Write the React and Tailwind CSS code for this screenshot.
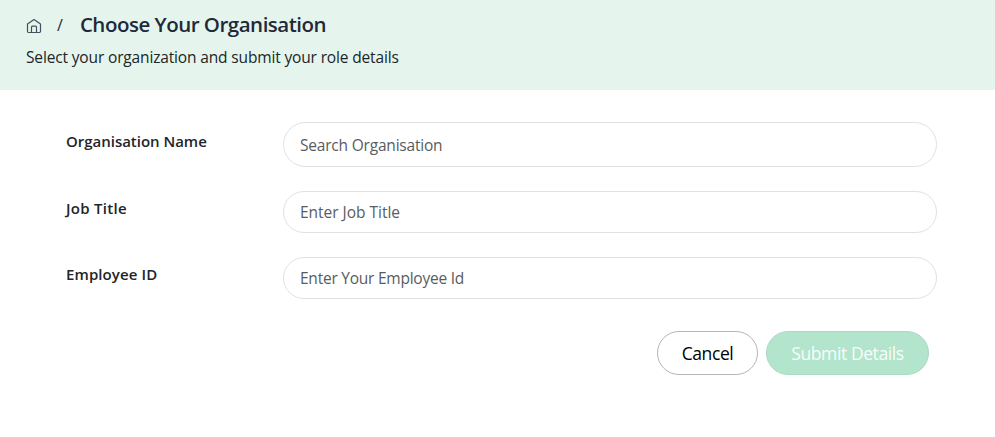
const fields = [
  { label: "Organisation Name", placeholder: "Search Organisation", size: "h-[45px]", labelClass: "pt-[7px] tracking-[-0.02px]", inputClass: "tracking-[-0.2px]" },
  { label: "Job Title", placeholder: "Enter Job Title", size: "h-[42px]", labelClass: "pt-[5px] tracking-[0.3px]", inputClass: "tracking-[-0.02px]" },
  { label: "Employee ID", placeholder: "Enter Your Employee Id", size: "h-[42px]", labelClass: "pt-[5px] tracking-[0.1px]", inputClass: "tracking-[-0.24px]" },
];

function HomeIcon() {
  return (
    <svg className="mt-0.5 size-4 shrink-0" viewBox="0 0 16 16" fill="none" stroke="#46505c" strokeWidth="1.2" strokeLinejoin="round" strokeLinecap="round">
      <path d="M1.5 6 8 1.5 14.5 6v7.4a1.1 1.1 0 0 1-1.1 1.1H2.6a1.1 1.1 0 0 1-1.1-1.1z" />
      <path d="M5.5 14.3V9.1a1 1 0 0 1 1-1h3a1 1 0 0 1 1 1v5.2" />
    </svg>
  );
}

export default function App() {
  return (
    <div className="h-[437px] w-[995px] bg-white font-['Open_Sans','Noto_Sans',sans-serif] text-[#212529]">
      <header className="h-[90px] bg-[#e5f5ed] px-[26px] pt-2.5">
        <div className="flex h-[30px] items-center">
          <HomeIcon />
          <span className="ml-[15px] text-base text-[#1f2937]">/</span>
          <h1 className="-mt-0.5 ml-[17px] text-[20.5px] font-semibold tracking-[-0.5px] text-[#1f2937]"><span className="inline-block whitespace-nowrap">Choose Your Organisation</span></h1>
        </div>
        <p className="mt-[5px] text-[15.5px] leading-6 tracking-[-0.15px]">Select your organization and submit your role details</p>
      </header>
      <form className="pl-[66px] pr-[58px] pt-8">
        <div className="flex flex-col gap-6">
          {fields.map((f) => (
            <div key={f.label} className="flex items-start">
              <label className={`${f.labelClass} w-[217px] text-[15px] font-semibold leading-6`}>{f.label}</label>
              <input
                placeholder={f.placeholder}
                className={`${f.size} ${f.inputClass} flex-1 rounded-full border border-[#dee2e6] px-4 text-[15.5px] placeholder:text-[#595c5f]`}
              />
            </div>
          ))}
        </div>
        <div className="mt-8 flex justify-end gap-2 pr-2">
          <button type="button" className="h-11 w-[101px] rounded-full border border-[#b5b5b5] text-[17.5px] tracking-[-0.4px] text-black">Cancel</button>
          <button type="button" className="h-11 w-[163px] rounded-full border border-[#abdac3] bg-[#b2e5cc] text-[17.5px] tracking-[-0.4px] text-[#f7fcfa]">Submit Details</button>
        </div>
      </form>
    </div>
  );
}
